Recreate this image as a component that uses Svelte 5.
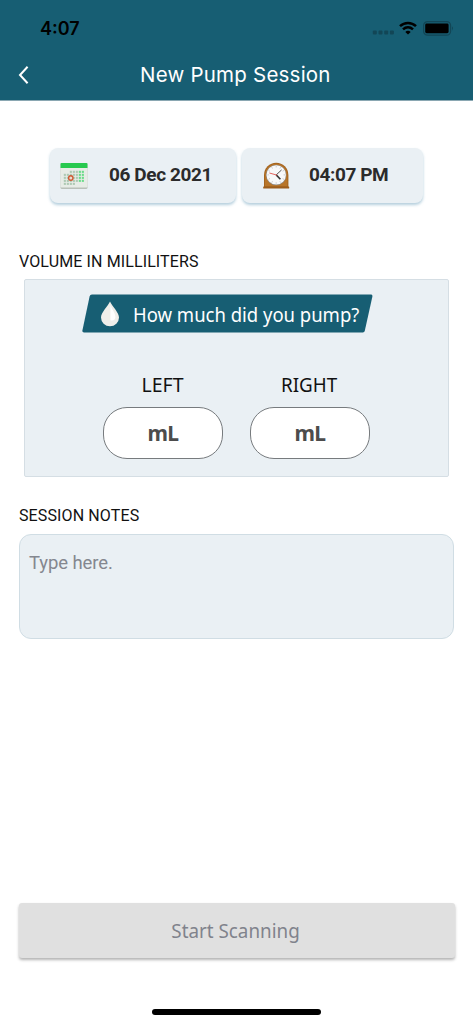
<script lang="ts">
  let notes = ''

  const sides = ['LEFT', 'RIGHT']
  const volumes: Record<string, string> = { LEFT: '', RIGHT: '' }

  // dots of the calendar grid, the first row starts later in the week
  const days = Array.from({ length: 35 }, (_, i) => ({
    col: i % 7,
    row: Math.floor(i / 7)
  })).filter(({ col, row }) => !(row === 0 && col < 2) && !(row === 4 && col > 3))

  const minutes = Array.from({ length: 12 }, (_, i) => i * 30)
</script>

<div class="screen">
  <header>
    <div class="status">
      <span class="clock">4:07</span>
      <div class="indicators">
        <svg width="22" height="5" viewBox="0 0 22 5" fill="#124656">
          <rect x="0.8" y="0.5" width="4" height="4" rx="1" />
          <rect x="6.5" y="0.5" width="4" height="4" rx="1" />
          <rect x="12.2" y="0.5" width="4" height="4" rx="1" />
          <rect x="17.9" y="0.5" width="4" height="4" rx="1" />
        </svg>
        <svg class="wifi" width="18" height="14" viewBox="0 0 18 14" fill="none" stroke="#000" stroke-width="2.5">
          <path d="M1 5.2C5.5 .8 12.5 .8 17 5.2" />
          <path d="M4 8.4C7 5.6 11 5.6 14 8.4" />
          <path d="M6.3 10.9C7.9 9.5 10.1 9.5 11.7 10.9L9 13.5Z" fill="#000" stroke="none" />
        </svg>
        <svg class="battery" width="31" height="15" viewBox="0 0 31 15">
          <rect x="0.6" y="0.6" width="27" height="13.6" rx="4" fill="none" stroke="#124656" stroke-width="1.2" />
          <rect x="2.2" y="2.6" width="23.4" height="9.6" rx="1.4" />
          <path d="M29 5.2Q30.8 7.4 29 9.8Z" fill="#0d3846" />
        </svg>
      </div>
    </div>
    <div class="nav">
      <button class="back" aria-label="Back">
        <svg width="12" height="18" viewBox="0 0 12 18" fill="none" stroke="#fff" stroke-width="2">
          <path d="M9.6 .8L2 9L9.6 17.2" />
        </svg>
      </button>
      <h1>New Pump Session</h1>
    </div>
  </header>

  <main>
    <div class="when">
      <button class="card date">
        <svg width="28" height="28" viewBox="0 0 28 28">
          <rect x="0.5" y="1" width="27" height="26" rx="1.5" fill="#b9c0b9" />
          <rect x="0.5" y="1" width="27" height="24.5" rx="1.2" fill="#e7ece6" />
          <path d="M.5 6V2Q.5 1 1.5 1H26.5Q27.5 1 27.5 2V6Z" fill="#27c94f" />
          {#each days as { col, row }}
            <rect
              x={3.8 + col * 3}
              y={8.8 + row * 3}
              width="2.1"
              height="2.1"
              fill={col > 4 ? '#6bdc8a' : '#adc9b3'}
            />
          {/each}
          <circle cx="10.8" cy="16" r="2.2" fill="#e7ddd2" stroke="#cf5a33" stroke-width="1.4" />
        </svg>
        <span>06 Dec 2021</span>
      </button>
      <button class="card time">
        <svg width="28" height="28" viewBox="0 0 28 28">
          <path d="M2 25V13A12.2 12.3 0 0 1 26.4 13V25Z" fill="#a4641f" />
          <path d="M3 24.4V13A11.2 11.3 0 0 1 25.4 13V24.4Z" fill="#b87529" />
          <rect x="1.2" y="24.4" width="26" height="2.2" rx="0.5" fill="#9c5d1c" />
          <circle cx="14.2" cy="13" r="10.3" fill="#8f8a84" />
          <circle cx="14.2" cy="12.9" r="9.7" fill="#f8f9fa" />
          {#each minutes as angle}
            <path d="M14.2 4.2V5.4" stroke="#aaa" stroke-width="0.7" transform="rotate({angle} 14.2 12.9)" />
          {/each}
          <path d="M14.2 12.9L18.4 17.2" stroke="#333" stroke-width="1.6" />
          <path d="M14.2 12.9L19.6 7.9" stroke="#555" stroke-width="1" />
          <path d="M15.2 13.2L7.4 11" stroke="#e0524c" stroke-width="0.9" />
        </svg>
        <span>04:07 PM</span>
      </button>
    </div>

    <h2 class="volume-title">VOLUME IN MILLILITERS</h2>
    <section class="volume">
      <div class="banner">
        <svg class="banner-shape" width="292" height="39" viewBox="0 0 292 39">
          <path
            d="M10 .6H288.8Q290.8 .6 290.4 2.6L282.8 36.8Q282.4 38.4 280.8 38.4H2Q0 38.4 .4 36.4L7.6 2.4Q8 .6 10 .6Z"
            fill="#175e73"
          />
        </svg>
        <svg class="drop" width="20" height="26" viewBox="0 0 20 26">
          <path d="M10 .6C12 5.4 19 11.4 19 16.6A9 8.7 0 0 1 1 16.6C1 11.4 8 5.4 10 .6Z" fill="#efeeea" />
          <path d="M10.4 4C11.6 8 15.6 12 15.4 16.4Q14.8 20.2 10.4 19.2Z" fill="#fff" />
        </svg>
        <span>How much did you pump?</span>
      </div>
      <div class="sides">
        {#each sides as side}
          <label>
            <span class={side.toLowerCase()}>{side}</span>
            <input placeholder="mL" bind:value={volumes[side]} />
          </label>
        {/each}
      </div>
    </section>

    <h2 class="notes-title">SESSION NOTES</h2>
    <textarea placeholder="Type here." bind:value={notes}></textarea>

    <button class="start" disabled><span>Start Scanning</span></button>
  </main>
  <div class="home"></div>
</div>

<style>
  :global(body) {
    background: #fff;
  }

  .screen {
    box-sizing: border-box;
    width: 473px;
    height: 1024px;
    display: flex;
    flex-direction: column;
    overflow: hidden;
    font-family: Roboto, sans-serif;
    color: #111;
  }

  button {
    border: none;
    padding: 0;
    font-family: inherit;
  }

  header {
    box-sizing: border-box;
    height: 101px;
    background: #175e73;
    border-bottom: 1px solid #8aa7b2;
  }

  .status {
    display: flex;
    justify-content: space-between;
    height: 50px;
    padding: 17px 20px 0 40px;
    box-sizing: border-box;
  }

  .clock {
    font: 600 18px/24px Inter, sans-serif;
    color: #000;
  }

  .indicators {
    display: flex;
    align-items: flex-start;
    height: 20px;
    margin-right: -1px;
  }

  .indicators > svg:first-child {
    margin-top: 13px;
  }

  .wifi {
    margin: 4px 6px 0 5px;
  }

  .battery {
    margin-top: 4px;
  }

  .nav {
    display: flex;
    align-items: center;
    height: 50px;
  }

  .back {
    width: 40px;
    height: 40px;
    padding-left: 18px;
    display: flex;
    align-items: center;
    background: none;
  }

  h1 {
    margin: 0 0 0 100px;
    font: 400 20.5px/30px Inter, sans-serif;
    letter-spacing: 0.22px;
    color: #fff;
    white-space: nowrap;
  }

  main {
    flex: 1;
    display: flex;
    flex-direction: column;
    padding: 47px 18px 0 19px;
  }

  .when {
    display: flex;
    gap: 6px;
    margin-left: 31px;
  }

  .card {
    display: flex;
    align-items: center;
    height: 55px;
    border-radius: 8px;
    background: #eaf0f4;
    box-shadow: 0 2px 3px rgba(70, 135, 170, 0.4);
    font-size: 19px;
    font-weight: 700;
    letter-spacing: -0.4px;
    color: #2b2b2b;
    white-space: nowrap;
  }

  .card span {
    margin-top: -2px;
  }

  .date {
    width: 186px;
    padding-left: 10px;
    gap: 21px;
  }

  .time {
    width: 181px;
    padding-left: 20px;
    gap: 19px;
  }

  h2 {
    margin: 0;
    font-size: 16px;
    font-weight: 400;
    line-height: 20px;
    letter-spacing: 0.12px;
    white-space: nowrap;
  }

  .volume-title {
    margin-top: 49px;
  }

  .volume {
    box-sizing: border-box;
    width: 425px;
    height: 198px;
    margin: 7px 0 0 5px;
    padding: 14px 0 0 57px;
    border: 1px solid #d5dee4;
    border-radius: 2px;
    background: #eaf0f4;
    font-family: 'Noto Sans', sans-serif;
  }

  .banner {
    position: relative;
    display: flex;
    align-items: center;
    width: 292px;
    height: 39px;
    color: #fff;
    font-size: 19.5px;
    white-space: nowrap;
  }

  .banner-shape {
    position: absolute;
    inset: 0;
  }

  .drop,
  .banner span {
    position: relative;
  }

  .banner span {
    margin-top: 1px;
    transform: scaleX(0.948);
    transform-origin: left;
  }

  .drop {
    margin: 0 13px 0 18px;
  }

  .sides {
    display: flex;
    gap: 27px;
    margin: 38px 0 0 21px;
  }

  label {
    display: flex;
    flex-direction: column;
    align-items: center;
    font-size: 19.5px;
    line-height: 28px;
  }

  .left {
    margin-right: 1px;
  }

  .right {
    margin-right: 1px;
    transform: scaleX(0.965);
  }

  input {
    box-sizing: border-box;
    width: 120px;
    height: 52px;
    margin-top: 8px;
    padding: 0;
    border: 1px solid #777b7e;
    border-radius: 24px;
    background: #fff;
    text-align: center;
    font: 700 21px 'Noto Sans', sans-serif;
    letter-spacing: -0.7px;
  }

  input::placeholder {
    color: #4c4c4c;
    opacity: 1;
  }

  .notes-title {
    margin-top: 29px;
  }

  textarea {
    box-sizing: border-box;
    width: 435px;
    height: 105px;
    margin-top: 8px;
    padding: 16px 9px;
    border: 1px solid #d0dde4;
    border-radius: 12px;
    background: #eaf0f4;
    resize: none;
    font: 400 18.5px/24px Roboto, sans-serif;
    letter-spacing: -0.1px;
  }

  textarea::placeholder {
    color: #84878f;
    opacity: 1;
  }

  .start {
    width: 436px;
    height: 55px;
    margin-top: 264px;
    border-radius: 3px;
    background: #e0e0e0;
    box-shadow: 0 2px 3px rgba(0, 0, 0, 0.3);
    color: #80838c;
    font: 400 19.5px 'Noto Sans', sans-serif;
  }

  .start span {
    display: inline-block;
    margin: -3px 3px 0 0;
    transform: scaleX(0.965);
  }

  .home {
    width: 169px;
    height: 6px;
    margin: 0 0 9px 152px;
    border-radius: 3px;
    background: #000;
  }
</style>
